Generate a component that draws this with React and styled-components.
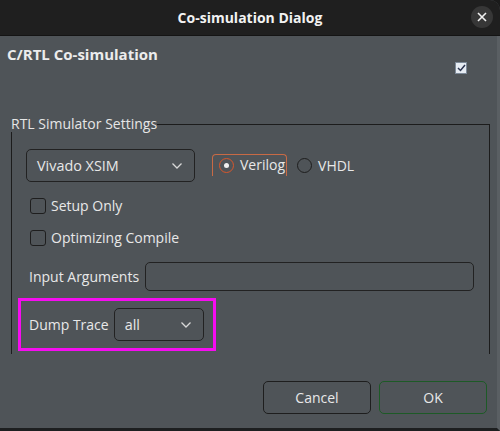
import React from 'react'
import { styled, createGlobalStyle } from 'styled-components'

const Global = createGlobalStyle`
  html, body { margin: 0; padding: 0; background: #1a1a1a; }
  body { font-family: "Open Sans", "Noto Sans", sans-serif; }
`

function Chevron() {
  return (
    <svg width="12" height="8" viewBox="0 0 12 8">
      <path d="M1.5 1.5 L6 6 L10.5 1.5" fill="none" stroke="#d8d8d8" strokeWidth="1.3" />
    </svg>
  )
}

export default function App() {
  return (
    <>
      <Global />
      <Window>
        <TitleBar>
          <Title>Co-simulation Dialog</Title>
          <CloseButton>
            <svg width="10" height="10" viewBox="0 0 10 10">
              <path d="M1 1 L9 9 M9 1 L1 9" stroke="#f0f0f0" strokeWidth="1.6" />
            </svg>
          </CloseButton>
        </TitleBar>
        <Body>
          <Heading>C/RTL Co-simulation</Heading>
          <TopCheckRow>
            <SmallCheck>
              <svg width="9" height="8" viewBox="0 0 9 8">
                <path d="M1 4 L3.5 6.5 L8 1" fill="none" stroke="#2c3550" strokeWidth="1.5" />
              </svg>
            </SmallCheck>
          </TopCheckRow>

          <GroupHeader>
            <GroupLabel>RTL Simulator Settings</GroupLabel>
            <GroupLine />
          </GroupHeader>
          <GroupBox>
            <Row>
              <Combo $width={169}>
                <span>Vivado XSIM</span>
                <Chevron />
              </Combo>
              <RadioGroup>
                <FocusFrame>
                  <Radio $checked />
                  <OptionText>Verilog</OptionText>
                </FocusFrame>
                <RadioItem>
                  <Radio />
                  <OptionText>VHDL</OptionText>
                </RadioItem>
              </RadioGroup>
            </Row>
            <CheckRow>
              <Box />
              <OptionText>Setup Only</OptionText>
            </CheckRow>
            <CheckRow>
              <Box />
              <OptionText>Optimizing Compile</OptionText>
            </CheckRow>
            <FieldRow>
              <FieldLabel>Input Arguments</FieldLabel>
              <TextInput />
            </FieldRow>
            <Highlight>
              <FieldLabel>Dump Trace</FieldLabel>
              <Combo $width={90}>
                <span>all</span>
                <Chevron />
              </Combo>
            </Highlight>
          </GroupBox>

          <ButtonRow>
            <Button>Cancel</Button>
            <Button $primary>OK</Button>
          </ButtonRow>
        </Body>
      </Window>
    </>
  )
}

const Window = styled.div`
  width: 500px;
  height: 431px;
  display: flex;
  flex-direction: column;
  background: #4f5458;
  overflow: hidden;
  border-top-right-radius: 10px;
`

const TitleBar = styled.div`
  height: 35px;
  flex: 0 0 35px;
  background: #1f1f1f;
  border-bottom: 1px solid #141414;
  display: flex;
  align-items: center;
  justify-content: center;
  position: relative;
`

const Title = styled.div`
  color: #f2f2f2;
  font-weight: 700;
  font-size: 14px;
`

const CloseButton = styled.div`
  position: absolute;
  right: 7px;
  top: 6px;
  width: 22px;
  height: 22px;
  border-radius: 50%;
  background: #373737;
  display: flex;
  align-items: center;
  justify-content: center;
`

const Body = styled.div`
  flex: 1;
  display: flex;
  flex-direction: column;
  padding: 9px 0 0 0;
  border-right: 3px solid #5a5f63;
  border-bottom: 3px solid #1d1f20;
  color: #e6e6e6;
`

const Heading = styled.div`
  font-weight: 700;
  font-size: 15px;
  line-height: 18px;
  padding-left: 7px;
  color: #ececec;
`

const TopCheckRow = styled.div`
  display: flex;
  justify-content: flex-end;
  padding-right: 30px;
  margin-top: -1px;
`

const SmallCheck = styled.div`
  width: 10px;
  height: 10px;
  background: #e6ecf3;
  border: 1px solid #7d8a99;
  display: flex;
  align-items: center;
  justify-content: center;
`

const GroupHeader = styled.div`
  display: flex;
  height: 16px;
  margin: 42px 7px 0 11px;
`

const GroupLabel = styled.div`
  font-size: 14px;
  line-height: 16px;
  color: #e6e6e6;
  white-space: nowrap;
`

const GroupLine = styled.div`
  flex: 1;
  align-self: flex-end;
  height: 7px;
  border-top: 1px solid #1c1c1c;
  border-right: 1px solid #1c1c1c;
`

const GroupBox = styled.div`
  margin: 0 7px 0 11px;
  height: 222px;
  flex: 0 0 222px;
  box-sizing: border-box;
  border-left: 1px solid #1c1c1c;
  border-right: 1px solid #1c1c1c;
  padding: 17px 15px 0 14px;
  display: flex;
  flex-direction: column;
`

const Row = styled.div`
  display: flex;
  align-items: center;
  height: 33px;
`

const Combo = styled.div`
  width: ${p => p.$width}px;
  height: 33px;
  box-sizing: border-box;
  border: 1px solid #222;
  border-radius: 5px;
  display: flex;
  align-items: center;
  justify-content: space-between;
  padding: 0 11px 0 10px;
  font-size: 14.4px;
  line-height: 16px;
  color: #e8e8e8;
`

const RadioGroup = styled.div`
  display: flex;
  align-items: center;
  margin-left: 17px;
  gap: 10px;
`

const FocusFrame = styled.div`
  display: flex;
  align-items: center;
  gap: 6px;
  height: 21px;
  padding: 0 1px 0 6px;
  border: 1.5px solid #c86a45;
  border-bottom: none;
  border-radius: 4px 4px 0 0;
  margin-top: -2px;
`

const RadioItem = styled.div`
  display: flex;
  align-items: center;
  gap: 6px;
`

const Radio = styled.div`
  width: 13px;
  height: 13px;
  border-radius: 50%;
  border: 1.5px solid ${p => (p.$checked ? '#d8572c' : '#1e1e1e')};
  display: flex;
  align-items: center;
  justify-content: center;
  &::after {
    content: "";
    width: 5px;
    height: 5px;
    border-radius: 50%;
    background: #f0f0f0;
    display: ${p => (p.$checked ? 'block' : 'none')};
  }
`

const OptionText = styled.span`
  font-size: 14px;
  line-height: 16px;
  color: #e8e8e8;
  white-space: nowrap;
`

const CheckRow = styled.div`
  display: flex;
  align-items: center;
  gap: 5px;
  height: 16px;
  margin-top: 16px;
  padding-left: 4px;
`

const Box = styled.div`
  width: 14px;
  height: 14px;
  border: 1px solid #1e1e1e;
  border-radius: 3px;
`

const FieldRow = styled.div`
  display: flex;
  align-items: center;
  gap: 6px;
  height: 29px;
  margin-top: 16px;
  padding-left: 3px;
`

const FieldLabel = styled.span`
  font-size: 14px;
  line-height: 16px;
  color: #e8e8e8;
  white-space: nowrap;
`

const TextInput = styled.div`
  flex: 1;
  height: 29px;
  box-sizing: border-box;
  border: 1px solid #222;
  border-radius: 5px;
`

const Highlight = styled.div`
  align-self: flex-start;
  display: flex;
  align-items: center;
  gap: 5px;
  margin: 7px 0 0 -8px;
  width: 198px;
  height: 53px;
  box-sizing: border-box;
  border: 3px solid #f60cf0;
  padding: 0 0 0 8px;
`

const ButtonRow = styled.div`
  display: flex;
  justify-content: flex-end;
  gap: 8px;
  margin-top: 27px;
  padding-right: 10px;
`

const Button = styled.div`
  width: 108px;
  height: 33px;
  box-sizing: border-box;
  border: 1px solid ${p => (p.$primary ? '#1d5a26' : '#1e1e1e')};
  border-radius: 5px;
  display: flex;
  align-items: center;
  justify-content: center;
  font-size: 14px;
  color: #e8e8e8;
`
